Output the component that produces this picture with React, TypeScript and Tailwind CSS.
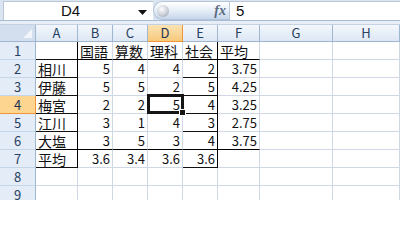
import React from 'react';

const GRID = 'border-[#d0d7e5]';
const FONT = { fontFamily: '"Noto Sans CJK JP", "Liberation Sans", sans-serif' };

const letters = ['A', 'B', 'C', 'D', 'E', 'F', 'G', 'H'];

const data: (string | number)[][] = [
  ['', '国語', '算数', '理科', '社会', '平均'],
  ['相川', 5, 4, 4, 2, 3.75],
  ['伊藤', 5, 5, 2, 5, 4.25],
  ['梅宮', 2, 2, 5, 4, 3.25],
  ['江川', 3, 1, 4, 3, 2.75],
  ['大塩', 3, 5, 3, 4, 3.75],
  ['平均', 3.6, 3.4, 3.6, 3.6, ''],
  ['', '', '', '', '', ''],
  ['', '', '', '', '', ''],
];

function Cell({ value, row, col }: { value: string | number; row: number; col: number }) {
  // thick (black) borders of the table
  const blackRight = (col === 0 || col === 4) && row >= 1 && row <= 7;
  const blackBottom = (row === 1 && col >= 1 && col <= 5) || (row === 6 && col >= 0 && col <= 5);
  const selected = row === 4 && col === 3;
  const isNum = typeof value === 'number';

  return (
    <div
      className={`relative h-[18px] border-r border-b px-[2px] flex items-center overflow-visible whitespace-nowrap text-[#111] ${
        isNum ? 'justify-end text-[13px]' : 'justify-start text-[14px]'
      } ${blackRight ? 'border-r-black' : GRID} ${blackBottom ? 'border-b-black' : ''}`}
    >
      <span className="leading-none">{value === '' ? '' : String(value)}</span>
      {selected && (
        <div className="absolute z-10 -left-[1px] -top-[2px] -right-[2px] -bottom-[1px] border-[3px] border-[#151515]">
          <div className="absolute -right-[5px] -bottom-[5px] w-[7px] h-[7px] bg-[#151515] border border-white" />
        </div>
      )}
    </div>
  );
}

export default function App() {
  return (
    <div className="w-[400px] h-[200px] overflow-hidden bg-white select-none" style={FONT}>
      {/* Formula bar */}
      <div className="h-[20px] bg-[#dbe5f1] flex items-stretch pl-[3px] pt-[1px]">
        <div className="w-[150px] bg-white border-l border-t border-[#b9c7d9] flex items-center relative">
          <span className="flex-1 text-center pr-[16px] text-[15px] text-[#111]" style={{ fontFamily: '"Liberation Sans", Arial, sans-serif' }}>
            D4
          </span>
          <svg width="9" height="5" viewBox="0 0 9 5" className="absolute right-[6px] top-[8px]">
            <path d="M0 0h9L4.5 5z" fill="#111" />
          </svg>
        </div>
        <div className="w-[76px] rounded-l-full bg-gradient-to-b from-[#ffffff] via-[#e6eef8] to-[#c7d6ea] border border-[#b4c5db] border-r-0 flex items-center pl-[3px] pr-[3px]">
          <div className="w-[12px] h-[12px] rounded-full bg-[radial-gradient(circle_at_40%_35%,#ffffff,#c9ced6_55%,#8e98a6)]" />
          <span
            className="ml-auto text-[14px] font-bold italic text-[#5b6b80] leading-none"
            style={{ fontFamily: '"Liberation Serif", "Times New Roman", serif' }}
          >
            fx
          </span>
        </div>
        <div className="flex-1 bg-white border-l border-t border-[#b9c7d9] flex items-center pl-[6px]">
          <span className="text-[15px] text-[#111]" style={{ fontFamily: '"Liberation Sans", Arial, sans-serif' }}>
            5
          </span>
        </div>
      </div>
      <div className="h-[5px] bg-[#e8eef6] border-t border-[#a9bcd5] border-b border-b-[#c5d2e3]" />

      {/* Sheet grid */}
      <div className="grid grid-cols-[36px_42px_35px_35px_35px_35px_42px_73px_1fr]">
        {/* corner */}
        <div className="h-[17px] bg-[#d3deee] border-r border-b border-[#9eb6ce] relative">
          <svg width="9" height="9" viewBox="0 0 9 9" className="absolute right-[3px] bottom-[3px]">
            <path d="M9 0v9H0z" fill="#f2f5fa" />
          </svg>
        </div>
        {letters.map((l) => (
          <div
            key={l}
            className={`h-[17px] border-r border-b flex items-center justify-center text-[13px] ${
              l === 'D'
                ? 'bg-gradient-to-b from-[#fbe3b3] to-[#f7c97c] border-[#f29536] border-b-[#f29536] text-[#1d3350]'
                : 'bg-gradient-to-b from-[#f3f7fc] to-[#dde7f4] border-[#9eb6ce] text-[#27415f]'
            }`}
          >
            {l}
          </div>
        ))}

        {data.map((row, r) => (
          <React.Fragment key={r}>
            <div
              className={`h-[18px] border-r border-b flex items-center justify-center text-[13px] ${
                r === 3
                  ? 'bg-[#fdd590] border-[#f29536] text-[#1d3350]'
                  : 'bg-[#e4ecf7] border-r-[#9eb6ce] border-b-[#c5d5e8] text-[#27415f]'
              }`}
            >
              {r + 1}
            </div>
            {row.map((v, c) => (
              <Cell key={c} value={v} row={r + 1} col={c} />
            ))}
            <div className={`h-[18px] border-r border-b ${GRID}`} />
            <div className={`h-[18px] border-r border-b ${GRID}`} />
          </React.Fragment>
        ))}
      </div>
    </div>
  );
}
